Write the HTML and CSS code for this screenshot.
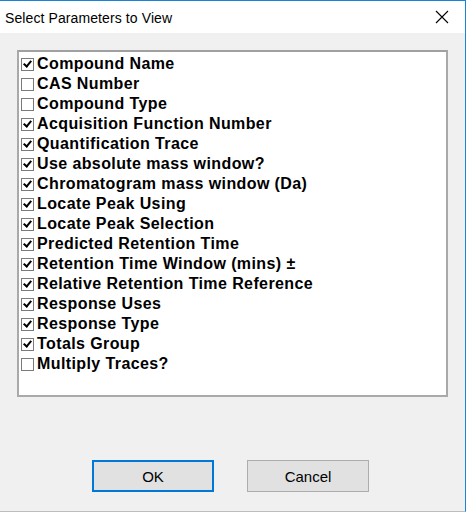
FILE: index.html
```html
<!DOCTYPE html>
<html>
<head>
<meta charset="utf-8">
<link rel="stylesheet" href="styles.css">
</head>
<body>
<div class="window">
  <div class="titlebar">
    <span class="title">Select Parameters to View</span>
    <svg class="close" width="14" height="14" viewBox="0 0 14 14"><path d="M1 1L13 13M13 1L1 13" stroke="#000" stroke-width="1.1" fill="none"/></svg>
  </div>
  <div class="content">
    <div class="listbox">
      <div class="row"><span class="cb on"></span><span class="lbl">Compound Name</span></div>
      <div class="row"><span class="cb"></span><span class="lbl">CAS Number</span></div>
      <div class="row"><span class="cb"></span><span class="lbl">Compound Type</span></div>
      <div class="row"><span class="cb on"></span><span class="lbl">Acquisition Function Number</span></div>
      <div class="row"><span class="cb on"></span><span class="lbl">Quantification Trace</span></div>
      <div class="row"><span class="cb on"></span><span class="lbl">Use absolute mass window?</span></div>
      <div class="row"><span class="cb on"></span><span class="lbl">Chromatogram mass window (Da)</span></div>
      <div class="row"><span class="cb on"></span><span class="lbl">Locate Peak Using</span></div>
      <div class="row"><span class="cb on"></span><span class="lbl">Locate Peak Selection</span></div>
      <div class="row"><span class="cb on"></span><span class="lbl">Predicted Retention Time</span></div>
      <div class="row"><span class="cb on"></span><span class="lbl">Retention Time Window (mins) ±</span></div>
      <div class="row"><span class="cb on"></span><span class="lbl">Relative Retention Time Reference</span></div>
      <div class="row"><span class="cb on"></span><span class="lbl">Response Uses</span></div>
      <div class="row"><span class="cb on"></span><span class="lbl">Response Type</span></div>
      <div class="row"><span class="cb on"></span><span class="lbl">Totals Group</span></div>
      <div class="row"><span class="cb"></span><span class="lbl">Multiply Traces?</span></div>
    </div>
    <div class="buttons">
      <button class="btn default">OK</button>
      <button class="btn">Cancel</button>
    </div>
  </div>
</div>
</body>
</html>
```
FILE: styles.css
```css
html, body {
  margin: 0;
  padding: 0;
  background: #ffffff;
}
.window {
  width: 465px;
  height: 510px;
  border-top: 1px solid #1883d7;
  border-right: 1px solid #1883d7;
  border-bottom: 1px solid #bdbdbd;
  background: #f0f0f0;
  display: flex;
  flex-direction: column;
  font-family: "Liberation Sans", Arial, sans-serif;
}
.titlebar {
  height: 32px;
  background: #ffffff;
  display: flex;
  align-items: center;
  justify-content: space-between;
  padding: 0 16px 0 5px;
}
.title {
  font-size: 14px;
  letter-spacing: 0.1px;
  color: #000;
  padding-top: 1px;
}
.close {
  display: block;
}
.content {
  flex: 1;
  padding: 17px 17px 0 17px;
  display: flex;
  flex-direction: column;
}
.listbox {
  height: 341px;
  background: #fff;
  border: 2px solid #a9a9a9;
  border-top-color: #a0a0a0;
  padding: 2px 0 0 2px;
}
.row {
  height: 20px;
  display: flex;
  align-items: center;
}
.cb {
  width: 11px;
  height: 11px;
  border: 1px solid #7a7a7a;
  background: #fff;
  margin-right: 3px;
  position: relative;
  flex: none;
}
.cb.on::after {
  content: "";
  position: absolute;
  left: 2px;
  top: 0px;
  width: 3px;
  height: 6px;
  border-right: 2px solid #000;
  border-bottom: 2px solid #000;
  transform: translate(1px, 0) rotate(40deg);
}
.lbl {
  font-weight: bold;
  font-size: 16px;
  letter-spacing: 0.4px;
  color: #000;
  white-space: nowrap;
}
.buttons {
  margin-top: 63px;
  display: flex;
  padding-left: 75px;
  gap: 33px;
}
.btn {
  width: 122px;
  height: 32px;
  background: #e1e1e1;
  border: 1px solid #adadad;
  font-family: "Liberation Sans", Arial, sans-serif;
  font-size: 15px;
  color: #000;
  padding: 0;
  margin: 0;
}
.btn.default {
  border: 2px solid #0078d7;
}
```
